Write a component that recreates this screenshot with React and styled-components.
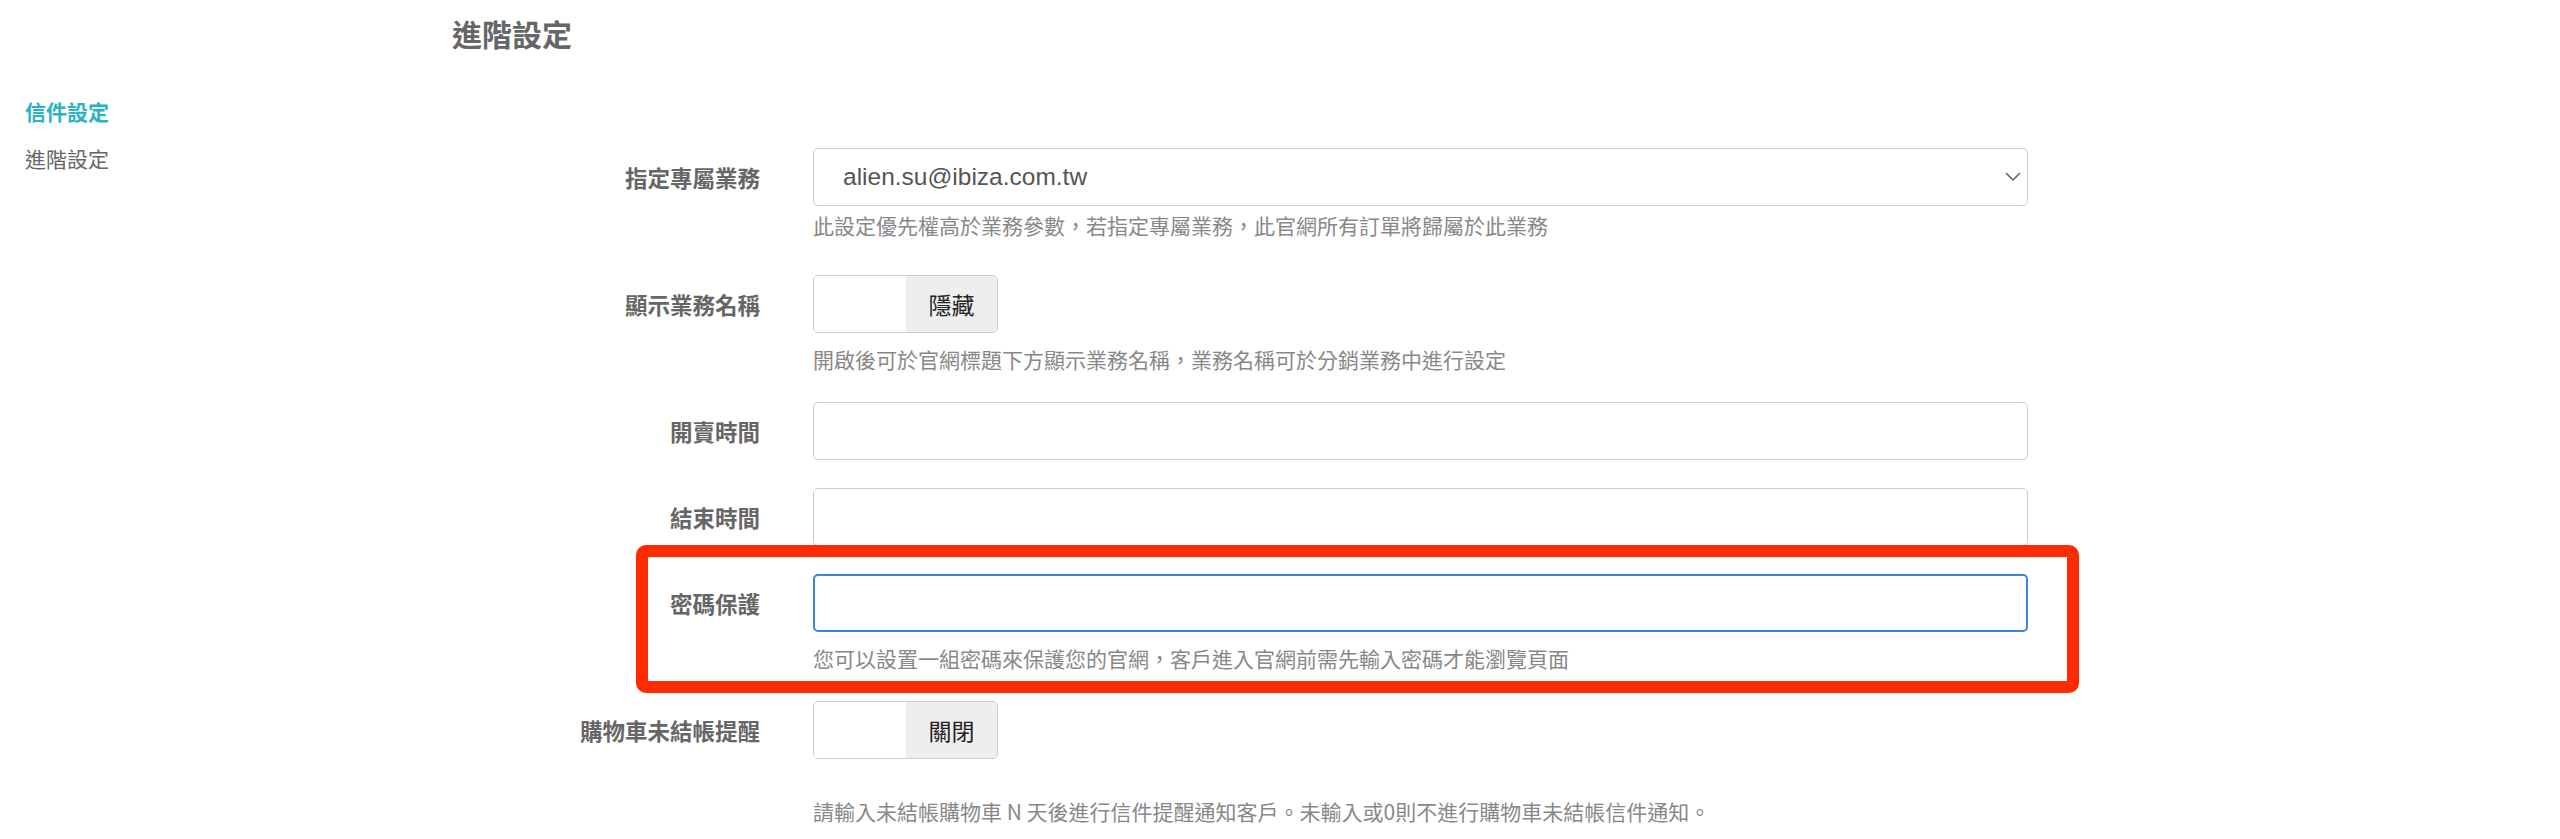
import React from 'react'
import styled, { createGlobalStyle } from 'styled-components'

const GlobalStyle = createGlobalStyle`
  html, body {
    margin: 0;
    padding: 0;
    background: #fff;
  }
  body {
    font-family: "Noto Sans CJK TC", "Noto Sans", sans-serif;
    color: #666;
  }
`

const Page = styled.div`
  display: flex;
  width: 2560px;
  min-height: 839px;
`

const Sidebar = styled.nav`
  width: 427px;
  padding: 88px 0 0 25px;
  display: flex;
  flex-direction: column;
`

const SideLink = styled.a`
  font-size: 21px;
  line-height: 47px;
  font-weight: ${props => props.$active ? 700 : 400};
  color: ${props => props.$active ? '#2ab3c6' : '#666'};
  text-decoration: none;
  cursor: pointer;
`

const Main = styled.main`
  flex: 1;
  padding-top: 15px;
`

const Title = styled.h2`
  margin: 0;
  font-size: 30px;
  line-height: 36px;
  font-weight: 700;
  color: #666;
`

const Form = styled.form`
  margin-top: 97px;
`

const Group = styled.div`
  position: relative;
  width: max-content;
  display: grid;
  grid-template-columns: 308px 1215px;
  column-gap: 53px;
  margin-bottom: ${props => props.$bottom || 28}px;

  ${props => props.$highlight && `
    &::after {
      content: '';
      position: absolute;
      left: 184px;
      right: -51px;
      top: -29px;
      bottom: -20px;
      border: 12px solid #ff2a00;
      border-radius: 10px;
      pointer-events: none;
    }
  `}
`

const Label = styled.label`
  grid-column: 1;
  grid-row: 1;
  align-self: center;
  text-align: right;
  font-size: 22.5px;
  font-weight: 700;
  color: #666;
`

const Help = styled.p`
  grid-column: 2;
  grid-row: 2;
  margin: ${props => props.$top || 11}px 0 0;
  font-size: 21px;
  line-height: 30px;
  color: #888;
`

const SelectBox = styled.div`
  grid-column: 2;
  box-sizing: border-box;
  height: 58px;
  display: flex;
  align-items: center;
  justify-content: space-between;
  padding: 0 6px 0 29px;
  border: 1px solid #ccc;
  border-radius: 5px;
  background: #fff;
  font-family: "Liberation Sans", "Noto Sans CJK TC", sans-serif;
  font-size: 24.5px;
  color: #555;
`

const TextInput = styled.input`
  grid-column: 2;
  box-sizing: border-box;
  height: 58px;
  width: 100%;
  margin: 0;
  padding: 0 29px;
  border: ${props => props.$focus ? '2px solid #3a88d4' : '1px solid #ccc'};
  border-radius: 5px;
  background: #fff;
  font-size: 22px;
  outline: none;
`

const Toggle = styled.div`
  grid-column: 2;
  box-sizing: border-box;
  width: 185px;
  height: 58px;
  display: flex;
  border: 1px solid #ccc;
  border-radius: 5px;
  overflow: hidden;
`

const ToggleKnob = styled.span`
  width: 92px;
  background: #fff;
`

const ToggleText = styled.span`
  flex: 1;
  display: flex;
  align-items: center;
  justify-content: center;
  background: #eee;
  font-size: 23px;
  color: #222;
`

const Chevron = () => (
  <svg width="16" height="10" viewBox="0 0 16 10" fill="none">
    <path d="M1.5 1.5 L8 8 L14.5 1.5" stroke="#666" strokeWidth="1.6" strokeLinecap="round" strokeLinejoin="round" />
  </svg>
)

export default function App() {
  return (
    <>
      <GlobalStyle />
      <Page>
        <Sidebar>
          <SideLink $active>信件設定</SideLink>
          <SideLink>進階設定</SideLink>
        </Sidebar>
        <Main>
          <Title>進階設定</Title>
          <Form onSubmit={e => e.preventDefault()}>
            <Group $bottom={35}>
              <Label>指定專屬業務</Label>
              <SelectBox>
                <span>alien.su@ibiza.com.tw</span>
                <Chevron />
              </SelectBox>
              <Help $top={4}>此設定優先權高於業務參數，若指定專屬業務，此官網所有訂單將歸屬於此業務</Help>
            </Group>

            <Group>
              <Label>顯示業務名稱</Label>
              <Toggle>
                <ToggleKnob />
                <ToggleText>隱藏</ToggleText>
              </Toggle>
              <Help>開啟後可於官網標題下方顯示業務名稱，業務名稱可於分銷業務中進行設定</Help>
            </Group>

            <Group>
              <Label>開賣時間</Label>
              <TextInput type="text" />
            </Group>

            <Group>
              <Label>結束時間</Label>
              <TextInput type="text" />
            </Group>

            <Group $highlight>
              <Label>密碼保護</Label>
              <TextInput type="text" $focus />
              <Help>您可以設置一組密碼來保護您的官網，客戶進入官網前需先輸入密碼才能瀏覽頁面</Help>
            </Group>

            <Group>
              <Label>購物車未結帳提醒</Label>
              <Toggle>
                <ToggleKnob />
                <ToggleText>關閉</ToggleText>
              </Toggle>
              <Help $top={37}>請輸入未結帳購物車 N 天後進行信件提醒通知客戶。未輸入或0則不進行購物車未結帳信件通知。</Help>
            </Group>
          </Form>
        </Main>
      </Page>
    </>
  )
}
